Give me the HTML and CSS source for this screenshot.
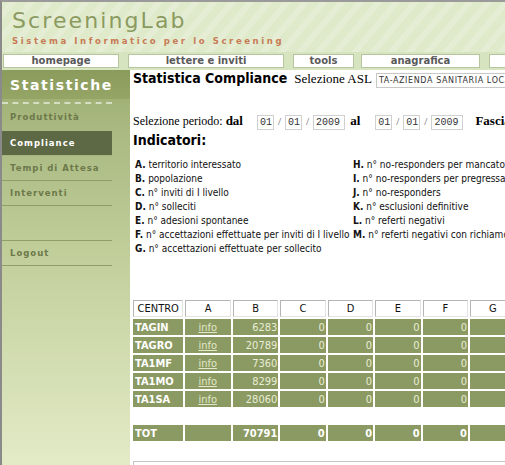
FILE: index.html
```html
<!DOCTYPE html>
<html lang="it">
<head>
<meta charset="utf-8">
<title>ScreeningLab - Statistica Compliance</title>
<link rel="stylesheet" href="styles.css">
</head>
<body>
<div class="page">
  <header class="brand">
    <div class="logo">ScreeningLab</div>
    <div class="tagline">Sistema Informatico per lo Screening</div>
  </header>
  <nav class="tabs">
    <a class="tab t-home">homepage</a>
    <a class="tab t-lettere">lettere e inviti</a>
    <a class="tab t-tools">tools</a>
    <a class="tab t-ana">anagrafica</a>
    <a class="tab t-more">&nbsp;</a>
  </nav>
  <div class="layout">
    <aside class="sidebar">
      <div class="side-title">Statistiche</div>
      <ul class="side-menu">
        <li class="side-item first">Produttività</li>
        <li class="side-item active">Compliance</li>
        <li class="side-item">Tempi di Attesa</li>
        <li class="side-item">Interventi</li>
        <li class="side-gap"></li>
        <li class="side-item">Logout</li>
      </ul>
    </aside>
    <main class="content">
      <div class="title-row">
        <h1 class="title">Statistica Compliance</h1>
        <span class="label">Selezione ASL</span>
        <span class="select">TA-AZIENDA SANITARIA LOCALE TARANTO</span>
      </div>
      <div class="period-row">
        <span class="plabel">Selezione periodo: <b>dal</b></span>
        <span class="inp w2">01</span><span class="sl">/</span>
        <span class="inp w2">01</span><span class="sl">/</span>
        <span class="inp w4">2009</span>
        <b class="al">al</b>
        <span class="inp w2">01</span><span class="sl">/</span>
        <span class="inp w2">01</span><span class="sl">/</span>
        <span class="inp w4">2009</span>
        <b class="fasc">Fascia</b>
      </div>
      <h2 class="ind-title">Indicatori:</h2>
      <div class="ind-grid">
        <div class="ind-col">
          <div><b>A.</b> territorio interessato</div>
          <div><b>B.</b> popolazione</div>
          <div><b>C.</b> n° inviti di I livello</div>
          <div><b>D.</b> n° solleciti</div>
          <div><b>E.</b> n° adesioni spontanee</div>
          <div><b>F.</b> n° accettazioni effettuate per inviti di I livello</div>
          <div><b>G.</b> n° accettazioni effettuate per sollecito</div>
        </div>
        <div class="ind-col">
          <div><b>H.</b> n° no-responders per mancato recapito</div>
          <div><b>I.</b> n° no-responders per pregressa</div>
          <div><b>J.</b> n° no-responders</div>
          <div><b>K.</b> n° esclusioni definitive</div>
          <div><b>L.</b> n° referti negativi</div>
          <div><b>M.</b> n° referti negativi con richiamo</div>
        </div>
      </div>
      <table class="stats">
        <thead>
          <tr><th class="c-name">CENTRO</th><th>A</th><th>B</th><th>C</th><th>D</th><th>E</th><th>F</th><th>G</th><th>H</th><th>I</th><th>J</th><th>K</th><th>L</th><th>M</th></tr>
        </thead>
        <tbody>
          <tr><td class="c-name">TAGIN</td><td class="c-info"><a>info</a></td><td>6283</td><td>0</td><td>0</td><td>0</td><td>0</td><td>0</td><td>0</td><td>0</td><td>0</td><td>0</td><td>0</td><td>0</td></tr>
          <tr><td class="c-name">TAGRO</td><td class="c-info"><a>info</a></td><td>20789</td><td>0</td><td>0</td><td>0</td><td>0</td><td>0</td><td>0</td><td>0</td><td>0</td><td>0</td><td>0</td><td>0</td></tr>
          <tr><td class="c-name">TA1MF</td><td class="c-info"><a>info</a></td><td>7360</td><td>0</td><td>0</td><td>0</td><td>0</td><td>0</td><td>0</td><td>0</td><td>0</td><td>0</td><td>0</td><td>0</td></tr>
          <tr><td class="c-name">TA1MO</td><td class="c-info"><a>info</a></td><td>8299</td><td>0</td><td>0</td><td>0</td><td>0</td><td>0</td><td>0</td><td>0</td><td>0</td><td>0</td><td>0</td><td>0</td></tr>
          <tr><td class="c-name">TA1SA</td><td class="c-info"><a>info</a></td><td>28060</td><td>0</td><td>0</td><td>0</td><td>0</td><td>0</td><td>0</td><td>0</td><td>0</td><td>0</td><td>0</td><td>0</td></tr>
          <tr class="spacer"><td colspan="14"></td></tr>
          <tr class="tot"><td class="c-name">TOT</td><td></td><td>70791</td><td>0</td><td>0</td><td>0</td><td>0</td><td>0</td><td>0</td><td>0</td><td>0</td><td>0</td><td>0</td><td>0</td></tr>
        </tbody>
      </table>
      <div class="notes"></div>
    </main>
  </div>
</div>
</body>
</html>
```
FILE: styles.css
```css
html, body {
  margin: 0;
  padding: 0;
  overflow: hidden;
  background: #fff;
}
.page {
  width: 505px;
  height: 465px;
  overflow: hidden;
  border-top: 2px solid #9a9a9a;
  border-left: 2px solid #8a8a8a;
  box-sizing: border-box;
  display: flex;
  flex-direction: column;
}
.brand {
  height: 50px;
  flex: none;
  padding: 6px 0 0 10px;
  box-sizing: border-box;
  background-color: #dfeacb;
  background-image: repeating-linear-gradient(-50deg, rgba(255,255,255,0.18) 0 6px, rgba(255,255,255,0) 6px 14px);
}
.logo {
  font-family: "DejaVu Sans", sans-serif;
  font-size: 22px;
  letter-spacing: 2.1px;
  color: #8b9a60;
  line-height: 26px;
}
.tagline {
  font-family: "DejaVu Sans", sans-serif;
  font-weight: bold;
  font-size: 8.5px;
  letter-spacing: 2.6px;
  color: #c87a55;
  margin-top: 2px;
}
.tabs {
  flex: none;
  height: 18px;
  display: flex;
  align-items: center;
  background: #d6e4bf;
  padding: 0 0 0 1px;
  box-sizing: border-box;
  overflow: hidden;
}
.tab {
  flex: none;
  height: 14px;
  box-sizing: border-box;
  background: #fff;
  border: 1px solid #b7c59c;
  font-family: "DejaVu Sans", sans-serif;
  font-weight: bold;
  font-size: 10px;
  line-height: 12px;
  color: #5a5a5a;
  text-align: center;
  margin-right: 9px;
}
.t-home { width: 116px; }
.t-lettere { width: 156px; }
.t-tools { width: 61px; margin-right: 7px; }
.t-ana { width: 119px; }
.t-more { width: 40px; }
.layout {
  flex: 1;
  display: flex;
  min-height: 0;
}
.sidebar {
  flex: none;
  width: 128px;
  background: linear-gradient(#9aab6d 0px, #a9b981 60px, #c4d19e 200px, #e2eac6 390px);
}
.side-title {
  height: 29px;
  background: linear-gradient(#8a9b5c, #95a566);
  color: #fff;
  font-family: "DejaVu Sans", sans-serif;
  font-weight: bold;
  font-size: 14px;
  letter-spacing: 1.6px;
  line-height: 30px;
  padding-left: 8px;
}
.side-menu {
  list-style: none;
  margin: 0;
  padding: 3px 0 0 0;
}
.side-menu::before {
  content: "";
  display: block;
  width: 110px;
  border-top: 2px dashed rgba(255,255,255,0.55);
}
.side-item {
  width: 110px;
  height: 25px;
  box-sizing: border-box;
  border-bottom: 1px solid #8f9d69;
  font-family: "DejaVu Sans", sans-serif;
  font-weight: bold;
  font-size: 8.5px;
  letter-spacing: 1px;
  color: #6c7849;
  line-height: 24px;
  padding-left: 8px;
}
.side-item.first { border-bottom: 0; height: 27px; line-height: 27px; }
.side-item.active {
  background: #5d6944;
  color: #fff;
  border-bottom-color: #a6b47f;
}
.side-gap {
  width: 110px;
  height: 35px;
  box-sizing: border-box;
  border-bottom: 1px solid #8f9d69;
}
.content {
  flex: 1;
  min-width: 0;
  padding: 0 0 0 3px;
  overflow: hidden;
  white-space: nowrap;
}
.title-row {
  display: flex;
  align-items: baseline;
  height: 16px;
  line-height: 16px;
}
.title {
  margin: 0 7px 0 0;
  font-family: "DejaVu Sans", sans-serif;
  font-stretch: condensed;
  font-weight: bold;
  font-size: 14px;
}
.label {
  font-family: "Liberation Serif", serif;
  font-size: 13px;
  color: #000;
}
.select {
  margin-left: 4px;
  border: 1px solid #c8c8c8;
  padding: 0 2px;
  line-height: 13px;
  font-family: "DejaVu Sans", sans-serif;
  font-size: 8px;
  letter-spacing: 0.6px;
  color: #333;
}
.period-row {
  margin-top: 27px;
  display: flex;
  align-items: baseline;
  height: 16px;
}
.plabel {
  font-family: "Liberation Serif", serif;
  font-size: 12px;
  margin-right: 10px;
}
.period-row b {
  font-family: "Liberation Serif", serif;
  font-size: 13px;
}
.inp {
  margin-left: 4px;
  box-sizing: border-box;
  height: 15px;
  border: 1px solid #d0d0d0;
  font-family: "Liberation Mono", monospace;
  font-size: 10px;
  line-height: 13px;
  padding: 0 2px;
  color: #333;
}
.inp:first-of-type { margin-left: 0; }
.w2 { width: 17px; }
.w4 { width: 34px; text-align: right; padding-right: 4px; }
.sl {
  margin-left: 4px;
  font-family: "Liberation Serif", serif;
  font-size: 11px;
  color: #555;
}
.al { margin-left: 5px; margin-right: 11px; }
.fasc { margin-left: 12px; }
.ind-title {
  margin: 3px 0 0 0;
  font-family: "DejaVu Sans", sans-serif;
  font-stretch: condensed;
  font-weight: bold;
  font-size: 14px;
  line-height: 17px;
}
.ind-grid {
  display: flex;
  margin: 9px 0 0 2px;
  font-family: "DejaVu Sans", sans-serif;
  font-stretch: condensed;
  font-size: 10px;
  line-height: 14px;
  color: #111;
}
.ind-col:first-child { width: 218px; flex: none; }
.stats {
  margin-top: 42px;
  margin-left: -2px;
  width: 671px;
  border-collapse: separate;
  border-spacing: 2px;
  font-family: "DejaVu Sans", sans-serif;
  font-stretch: condensed;
  font-size: 11px;
  table-layout: fixed;
}
.stats th {
  width: 45px;
  height: 17px;
  box-sizing: border-box;
  background: #fff;
  border: 1px solid;
  border-color: #b5b5b5 #e3e3e3 #e3e3e3 #b5b5b5;
  font-weight: normal;
  color: #111;
  padding: 0;
}
.stats th.c-name { width: 50px; }
.stats td {
  height: 16px;
  box-sizing: border-box;
  background: #8b9a62;
  color: #e9edd6;
  text-align: right;
  padding: 0 1px 0 0;
  font-size: 11px;
}
.stats td.c-name {
  text-align: left;
  font-weight: bold;
  color: #fff;
  padding-left: 2px;
}
.stats td.c-info { text-align: center; }
.stats td.c-info a { color: #e2e8c9; text-decoration: underline; }
.stats tr.spacer td { background: transparent; height: 14px; }
.stats tr.tot td { font-weight: bold; color: #fff; }
.notes {
  margin-top: 18px;
  height: 30px;
  border: 1px solid #c4c4c4;
  width: 600px;
}
```
